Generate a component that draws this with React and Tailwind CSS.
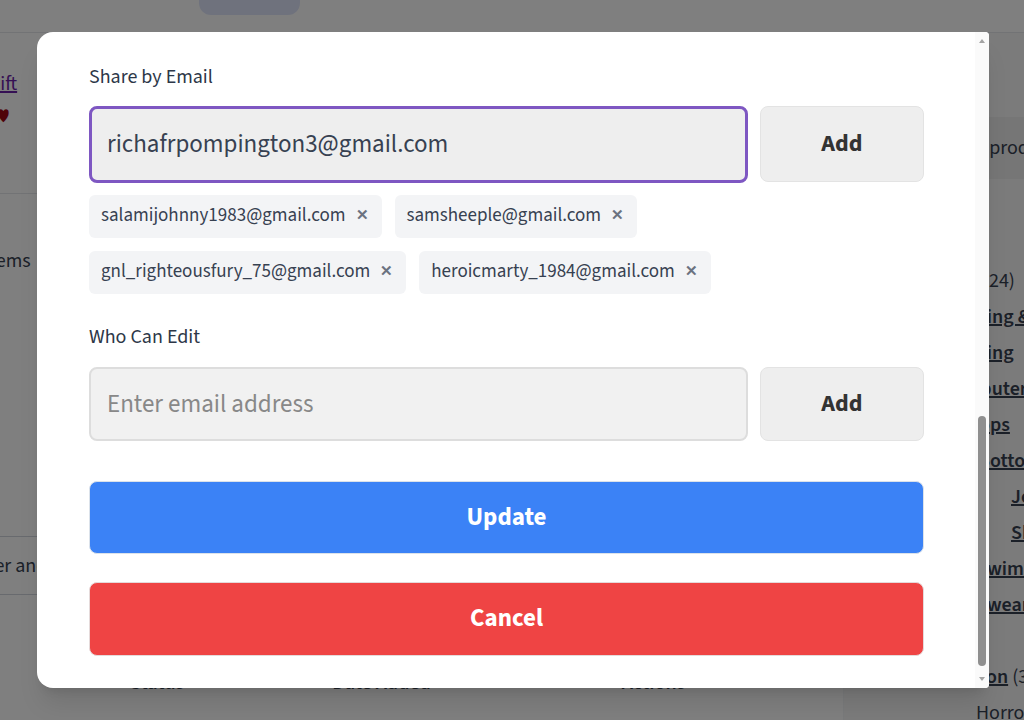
import React, { useLayoutEffect, useRef } from "react";

const font = { fontFamily: '"Source Sans 3", Lato, "Noto Sans", sans-serif' };

const sharedWith = [
  "salamijohnny1983@gmail.com",
  "samsheeple@gmail.com",
  "gnl_righteousfury_75@gmail.com",
  "heroicmarty_1984@gmail.com",
];

const Tag = ({ email }) => (
  <span className="inline-flex items-center h-[43px] pl-3 pr-[13px] rounded-md bg-[#f3f4f6] text-[#374151] text-[19px]">
    {email}
    <span className="ml-[10px] text-[#6b7280] text-[15px] font-bold">✕</span>
  </span>
);

const SideLink = ({ children, indent = "pl-[97px]" }) => (
  <div className={`${indent} whitespace-nowrap`}>
    <span className="underline font-semibold">{children}</span>
  </div>
);

const Background = () => (
  <div className="h-[720px] w-[1024px] bg-white text-[#374151] overflow-hidden text-[20px]">
    <div className="h-[33px] border-b border-gray-200 relative">
      <div className="absolute left-[199px] -top-[13px] w-[101px] h-[28px] rounded-xl bg-[#dfe5fa]" />
    </div>
    <div className="flex">
      <div className="w-[843px] shrink-0 pt-9">
        <div className="h-[124px] -ml-[12px]">
          <a className="text-[#6b21a8] underline">Gift</a>
          <div className="mt-1 text-red-800 text-lg pl-[10px]">♥</div>
        </div>
        <div className="border-t border-gray-200 pt-[52px] -ml-[16px]">Items</div>
        <div className="mt-[260px] border-y border-gray-300 h-[59px] flex items-center -ml-[32px] whitespace-nowrap">
          Filter and sort
        </div>
        <div className="mt-[76px] flex font-semibold leading-6 whitespace-nowrap">
          <span className="ml-[130px]">Status</span>
          <span className="ml-[148px]">Date Added</span>
          <span className="ml-[191px]">Actions</span>
        </div>
      </div>
      <div className="flex-1 bg-[#f6f6f6] border-l border-gray-100 pt-[84px] overflow-hidden leading-9">
        <div className="bg-[#ececec] h-[62px] flex items-center pl-[84px] whitespace-nowrap">Search products</div>
        <div className="mt-[84px] pl-[97px] whitespace-nowrap">Toys (24)</div>
        <SideLink>Clothing &amp; Shoes</SideLink>
        <SideLink>Clothing</SideLink>
        <SideLink>Computers</SideLink>
        <SideLink>Laptops</SideLink>
        <SideLink indent="pl-[134px]">Bottoms</SideLink>
        <SideLink indent="pl-[167px]">Jeans</SideLink>
        <SideLink indent="pl-[167px]">Shorts</SideLink>
        <SideLink indent="pl-[132px]">Swimwear</SideLink>
        <SideLink indent="pl-[95px]">Sleepwear</SideLink>
        <div className="mt-9 pl-[105px] whitespace-nowrap">
          <span className="underline font-semibold">Fiction</span> (3)
        </div>
        <div className="pl-[132px] whitespace-nowrap">Horror</div>
      </div>
    </div>
  </div>
);

const Field = ({ label, children }) => (
  <div className="mb-8">
    <p className="text-[20px] leading-[26px] text-[#2d3748] mb-4">{label}</p>
    {children}
  </div>
);

const inputBox =
  "w-full rounded-lg bg-[#f1f1f1] border-2 border-[#dddddd] px-4 text-[25px] text-[#374151] outline-none";

export default function App() {
  const scroller = useRef(null);

  useLayoutEffect(() => {
    if (scroller.current) scroller.current.scrollTop = scroller.current.scrollHeight;
  }, []);

  return (
    <div className="relative w-[1024px] h-[720px] overflow-hidden" style={font}>
      <Background />
      <div className="absolute inset-0 bg-black/50" />

      <div className="absolute left-[37px] top-[32px] w-[952px] h-[656px] bg-white rounded-l-2xl rounded-r-[4px] shadow-xl flex overflow-hidden">
        <div ref={scroller} className="flex-1 overflow-hidden">
          <div className="pl-[52px] pr-[51px] pt-12 pb-8">
            <h2 className="text-[28px] font-bold text-[#1f2937] mb-8">Edit Wishlist</h2>
            <Field label="List Name">
              <input className={`${inputBox} h-[74px]`} defaultValue="Birthday Gifts" />
            </Field>
            <Field label="Description">
              <textarea className={`${inputBox} h-[200px] py-4`} defaultValue="Things I would love to get this year." />
            </Field>
            <Field label="Event Date">
              <input className={`${inputBox} h-[74px]`} defaultValue="2024-06-18" />
            </Field>
            <Field label="Visibility">
              <div className="flex flex-col gap-3 text-[20px] text-[#374151]">
                <label className="flex items-center gap-3"><input type="radio" name="v" defaultChecked /> Private</label>
                <label className="flex items-center gap-3"><input type="radio" name="v" /> Shared</label>
                <label className="flex items-center gap-3"><input type="radio" name="v" /> Public</label>
              </div>
            </Field>
            <Field label="Notes">
              <textarea className={`${inputBox} h-[160px] py-4`} defaultValue="" />
            </Field>

            <p className="text-[20px] leading-[26px] text-[#2d3748] mb-4">Share by Email</p>
            <div className="flex gap-3">
              <div className="flex-1 h-[77px] rounded-lg border-[3px] border-[#7e57c2] bg-[#eeeeee] flex items-center px-[15px] text-[25px] text-[#374151]">
                richafrpompington3@gmail.com
              </div>
              <button className="w-[164px] h-[76px] rounded-lg bg-[#eeeeee] border border-[#e3e3e3] text-[24px] font-bold text-[#333333]">
                Add
              </button>
            </div>
            <div className="flex flex-wrap gap-[13px] mt-3">
              {sharedWith.map((e) => (
                <Tag key={e} email={e} />
              ))}
            </div>

            <p className="text-[20px] leading-[26px] text-[#2d3748] mt-[30px] mb-[17px]">Who Can Edit</p>
            <div className="flex gap-3">
              <input
                placeholder="Enter email address"
                className="flex-1 h-[74px] rounded-lg border-2 border-[#dddddd] bg-[#f1f1f1] px-4 text-[25px] text-[#374151] placeholder:text-[#888888] outline-none"
              />
              <button className="w-[164px] h-[74px] rounded-lg bg-[#eeeeee] border border-[#e3e3e3] text-[24px] font-bold text-[#333333]">
                Add
              </button>
            </div>

            <button className="mt-10 w-full h-[73px] rounded-lg bg-[#3b82f6] border border-[#dbe2ea] text-white text-[25px] font-bold">
              Update
            </button>
            <button className="mt-7 w-full h-[74px] rounded-lg bg-[#ef4444] border border-[#e5dada] text-white text-[25px] font-bold">
              Cancel
            </button>
          </div>
        </div>

        {/* scrollbar */}
        <div className="w-[14px] shrink-0 bg-[#fafafa] flex flex-col items-center py-1">
          <svg width="8" height="6" viewBox="0 0 8 6" className="mt-[2px]">
            <path d="M4 1 L7 5 L1 5 Z" fill="#a3a3a3" />
          </svg>
          <div className="flex-1 w-full flex flex-col justify-end px-[3px] pb-[10px]">
            <div className="h-[250px] rounded-full bg-[#8f8f8f]" />
          </div>
          <svg width="8" height="6" viewBox="0 0 8 6" className="mb-[2px]">
            <path d="M1 1 L7 1 L4 5 Z" fill="#a3a3a3" />
          </svg>
        </div>
      </div>
    </div>
  );
}
